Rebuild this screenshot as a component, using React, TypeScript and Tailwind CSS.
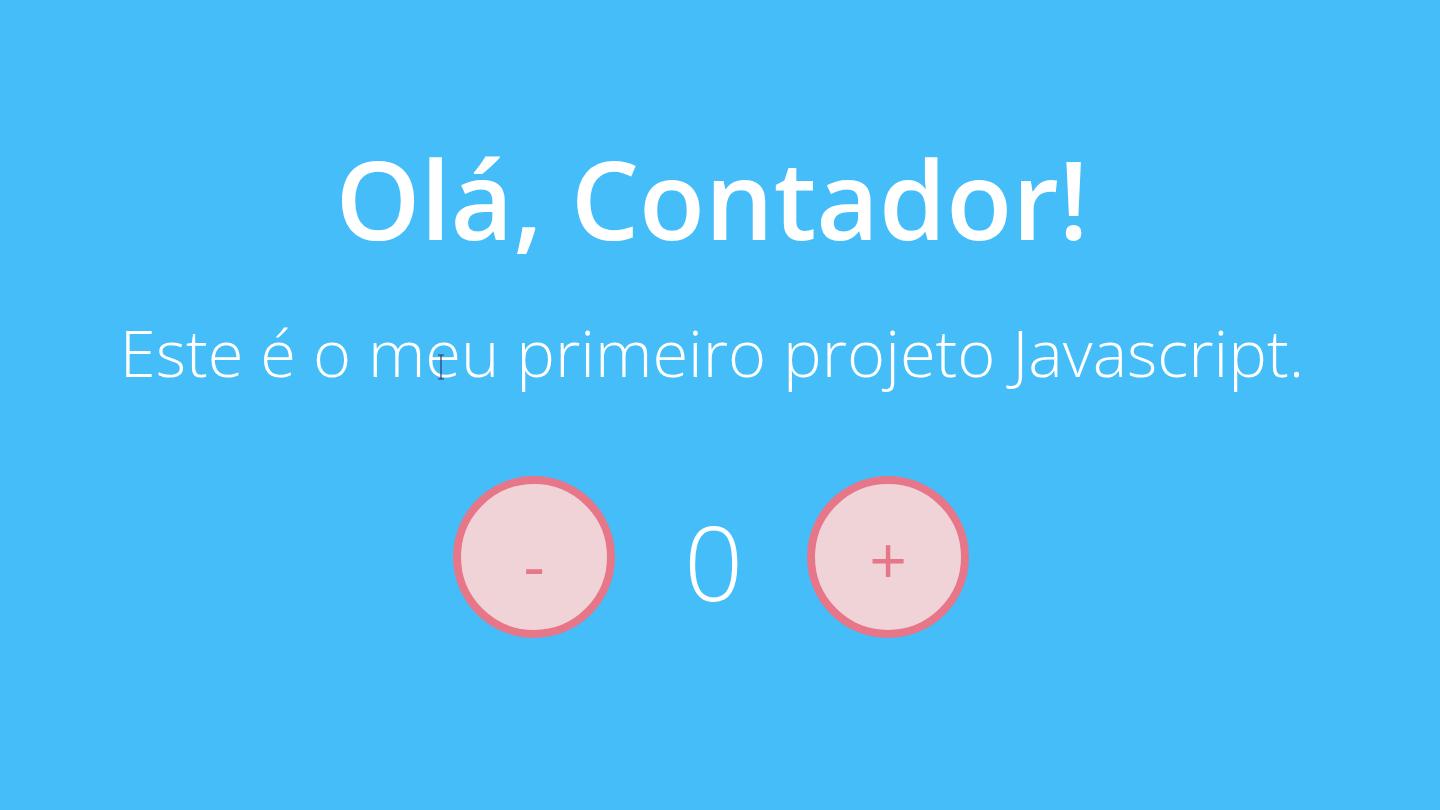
import React, { useState } from "react";

export default function App() {
  const [count, setCount] = useState(0);
  return (
    <div
      className="relative w-full h-[810px] bg-[#45bdf9] flex flex-col items-center pr-[16px] text-white overflow-hidden"
      style={{ fontFamily: '"Open Sans", "Noto Sans", sans-serif' }}
    >
      <h1 className="mt-[134px] text-[108px] leading-[130px] font-semibold">Olá, Contador!</h1>
      <p className="mt-[43px] text-[65px] leading-[90px] font-light">Este é o meu primeiro projeto Javascript.</p>
      <div className="mt-[79px] mr-[2px] flex items-center gap-[69px]">
        <button
          onClick={() => setCount(count - 1)}
          className="w-[162px] h-[162px] shrink-0 rounded-full bg-[#f0d3d7] border-[8px] border-[#e67688] text-[#e67688] text-[66px] leading-none font-medium flex items-center justify-center pt-[12px]"
        >
          -
        </button>
        <span className="w-[54px] text-center text-[104px] leading-[130px] font-light pt-[8px]">{count}</span>
        <button
          onClick={() => setCount(count + 1)}
          className="w-[162px] h-[162px] shrink-0 rounded-full bg-[#f0d3d7] border-[8px] border-[#e67688] text-[#e67688] text-[66px] leading-none font-medium flex items-center justify-center pt-[2px]"
        >
          +
        </button>
      </div>
      <svg className="absolute left-[437px] top-[354px]" width="8" height="26" viewBox="0 0 8 26">
        <path d="M1 1h6M4 1v24M1 25h6" stroke="#3b3560" strokeWidth="1.2" fill="none" />
      </svg>
    </div>
  );
}
